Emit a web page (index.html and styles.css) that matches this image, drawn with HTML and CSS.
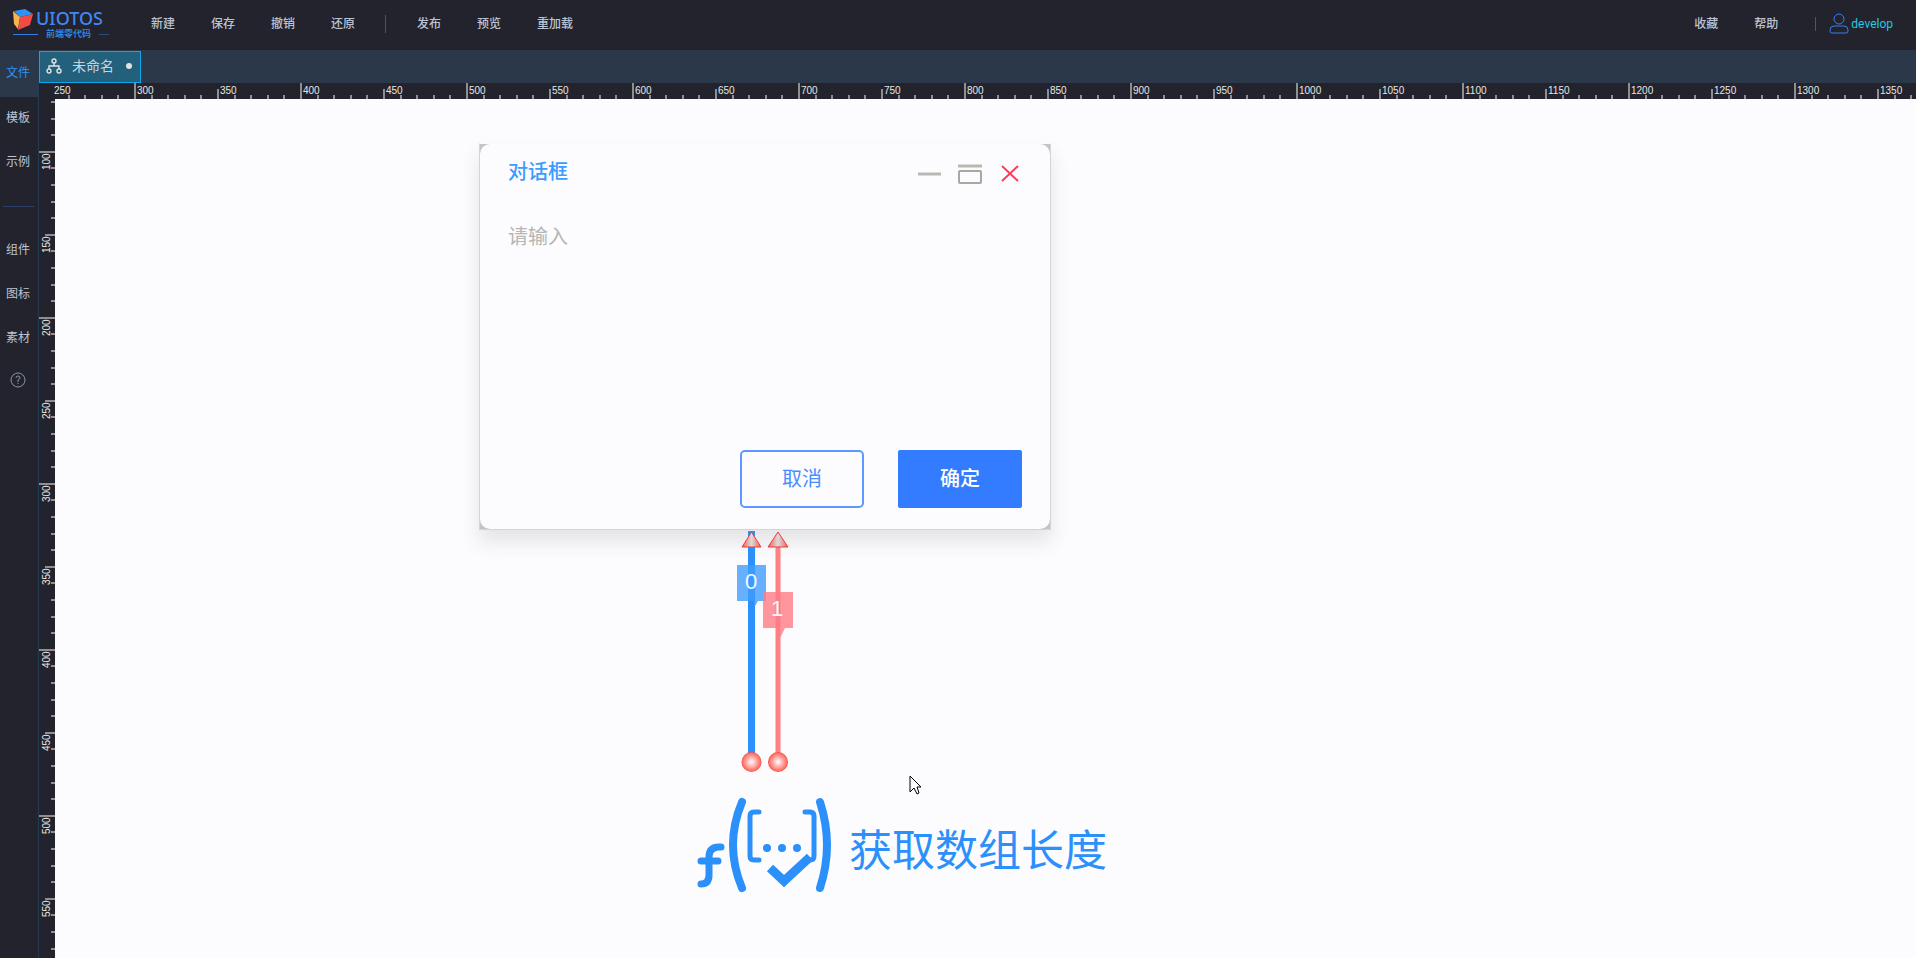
FILE: index.html
```html
<!DOCTYPE html>
<html lang="zh-CN">
  <head>
    <meta charset="UTF-8" />
    <meta name="viewport" content="width=device-width, initial-scale=1.0" />
    <title>UIOTOS</title>
    <link rel="stylesheet" href="styles.css">
  </head>
  <body>
    <header class="topbar">
      <a class="logo" href="#">
        <svg class="logo-cube" viewBox="0 0 20 22">
          <path d="M1 2 L12 0 L20 5 L7 8 Z" fill="#2f93f5" />
          <path d="M0 2 L7 8 L5 20 L1 15 Z" fill="#fbb34c" />
          <path d="M7 8 L20 5 L17 16 L5 21 Z" fill="#f44a45" />
        </svg>
        <span class="logo-name">UIOTOS</span>
        <span class="logo-sub">前端零代码</span>
      </a>
      <nav class="menu">
        <button type="button">新建</button>
        <button type="button">保存</button>
        <button type="button">撤销</button>
        <button type="button">还原</button>
        <i class="sep"></i>
        <button type="button">发布</button>
        <button type="button">预览</button>
        <button type="button">重加载</button>
      </nav>
      <nav class="menu menu-right">
        <button type="button">收藏</button>
        <button type="button">帮助</button>
        <i class="sep"></i>
        <a class="user" href="#">
          <svg viewBox="0 0 20 22" width="20" height="22">
            <circle cx="10" cy="6" r="5" />
            <path d="M1 17 Q1 13 5 13 H15 Q19 13 19 17 V18 Q19 20 17 20 H3 Q1 20 1 18 Z" />
          </svg>
          develop
        </a>
      </nav>
    </header>

    <main class="main">
      <aside class="sidebar">
        <a class="active" href="#">文件</a>
        <a href="#">模板</a>
        <a href="#">示例</a>
        <hr>
        <a href="#">组件</a>
        <a href="#">图标</a>
        <a href="#">素材</a>
        <a class="help" href="#" aria-label="help">
          <svg viewBox="0 0 16 16" width="16" height="16">
            <circle cx="8" cy="8" r="7" />
            <path d="M6 6 Q6 4 8 4 Q10 4 10 6 Q10 7 8 8 V10 M8 11 V12" />
          </svg>
        </a>
      </aside>

      <section class="editor">
        <div class="tabs">
          <button type="button" class="tab">
            <svg viewBox="0 0 16 16" width="16" height="16">
              <circle cx="8" cy="3" r="2" />
              <circle cx="3" cy="13" r="2" />
              <circle cx="13" cy="13" r="2" />
              <path d="M8 5 V8 M3 11 V8 H13 V11" />
            </svg>
            <span>未命名</span>
            <i class="dot"></i>
          </button>
        </div>
        <svg class="ruler-x" id="rulerX"></svg>
        <div class="work">
          <svg class="ruler-y" id="rulerY"></svg>
          <div class="canvas">
            <form class="dialog">
              <div class="dialog-body">
                <div class="dialog-head">
                  <label for="content">对话框</label>
                  <div class="dialog-tools">
                    <button type="button" aria-label="min">
                      <svg viewBox="0 0 24 20" width="24" height="20"><path d="M0 10 H23" stroke="#b9b9b4" stroke-width="3" /></svg>
                    </button>
                    <button type="button" aria-label="max">
                      <svg viewBox="0 0 24 20" width="24" height="20"><path d="M0 2 H24" stroke="#b9b9b4" stroke-width="3" /><rect x="1" y="7" width="22" height="12" rx="1" fill="none" stroke="#a8a8a3" stroke-width="2" /></svg>
                    </button>
                    <button type="button" aria-label="close">
                      <svg viewBox="0 0 24 20" width="24" height="20"><path d="M4 2 L20 17 M20 2 L4 17" stroke="#fb3b5c" stroke-width="2" /></svg>
                    </button>
                  </div>
                </div>
                <textarea id="content" placeholder="请输入"></textarea>
                <div class="dialog-foot">
                  <button type="button" class="btn">取消</button>
                  <button type="button" class="btn primary">确定</button>
                </div>
              </div>
            </form>

            <svg class="links" viewBox="0 0 60 245" width="60" height="245">
              <defs>
                <linearGradient id="arrow">
                  <stop offset="0" stop-color="#f0605c" />
                  <stop offset="0.5" stop-color="#dcdcdc" />
                  <stop offset="1" stop-color="#f0605c" />
                </linearGradient>
                <radialGradient id="ball">
                  <stop offset="0" stop-color="#fff" />
                  <stop offset="0.9" stop-color="#ff6a60" />
                  <stop offset="1" stop-color="#f04840" />
                </radialGradient>
              </defs>
              <path d="M16.5 0 V226" stroke="#2c90fb" stroke-width="7" />
              <path d="M43 4 V226" stroke="#ff8080" stroke-width="5" />
              <path d="M16.5 1 L26 16 H7 Z" fill="url(#arrow)" stroke="#f03a3a" />
              <path d="M43 1 L53 16 H33 Z" fill="url(#arrow)" stroke="#f03a3a" />
              <path d="M2 34 H31 V70 H23 L19 77 V70 H2 Z" fill="#409cff" fill-opacity="0.8" />
              <path d="M28 61 H58 V97 H50 L45 107 V97 H28 Z" fill="#ff7c84" fill-opacity="0.8" />
              <text x="16" y="58">0</text>
              <text x="42" y="85">1</text>
              <circle cx="16.5" cy="231" r="10" fill="url(#ball)" />
              <circle cx="43" cy="231" r="10" fill="url(#ball)" />
            </svg>

            <div class="func">
              <svg viewBox="0 0 136 96" width="136" height="96">
                <path d="M45 5 Q27 48 45 91 M123 5 Q137 48 123 91" stroke-width="8" />
                <path d="M62 15 H57 Q53 15 53 19 V59 Q53 63 57 63 H62 M108 15 H113 Q117 15 117 19 V59 Q117 63 113 63" stroke-width="5" />
                <path d="M24 50 H22 Q12 50 12 60 V78 Q12 87 4 87 M4 64 H21" stroke-width="7" />
                <path d="M73 71 L87 84 L113 60" stroke-width="9" stroke-linecap="butt" stroke-linejoin="miter" />
                <g fill="#2c90fb" stroke="none">
                  <circle cx="70" cy="51" r="4" />
                  <circle cx="85" cy="51" r="4" />
                  <circle cx="100" cy="51" r="4" />
                </g>
              </svg>
              <span>获取数组长度</span>
            </div>

            <svg class="cursor" viewBox="0 0 13 20" width="13" height="20">
              <path d="M1 1 V17 L5 13 L8 19 L10 18 L8 12 H12 Z" />
            </svg>
          </div>
        </div>
      </section>
    </main>
    <script src="rulers.js"></script>
  </body>
</html>
```
FILE: styles.css
```css
* {
  box-sizing: border-box;
}

body {
  margin: 0;
  height: 100vh;
  display: flex;
  flex-direction: column;
  overflow: hidden;
  background: #22232c;
  color: #bcc3d4;
  font: 12px/16px "Liberation Sans", "Noto Sans CJK SC", sans-serif;
}

a {
  color: inherit;
  text-decoration: none;
}

button {
  border: 0;
  padding: 0;
  background: none;
  color: inherit;
  font: inherit;
  cursor: pointer;
}

/* top bar */
.topbar {
  display: flex;
  align-items: center;
  flex: none;
  height: 50px;
  padding: 0 23px 2px 13px;
}

.logo {
  display: grid;
  grid-template-columns: 23px auto;
  width: 120px;
  color: #4087f7;
}

.logo-cube {
  width: 20px;
  height: 22px;
}

.logo-name {
  font: 500 18px/18px "Noto Sans", sans-serif;
}

.logo-sub {
  grid-column: 1 / 3;
  display: flex;
  align-items: center;
  gap: 8px;
  width: 96px;
  margin-top: -2px;
  font-size: 9px;
  font-weight: 500;
  line-height: 10px;
  color: #2f93f5;
}

.logo-sub::before,
.logo-sub::after {
  content: "";
  width: 25px;
  height: 1px;
  background: #2f7fe0;
}

.logo-sub::after {
  width: 10px;
  background: #2b4c80;
}

.menu {
  display: flex;
  align-items: center;
  font-weight: 500;
}

.menu button {
  padding: 0 18px;
}

.menu-right {
  margin-left: auto;
}

.sep {
  width: 1px;
  height: 18px;
  margin: 0 13px 0 12px;
  background: #45566f;
}

.menu-right .sep {
  height: 14px;
  margin: 0 13px 0 19px;
}

.user {
  display: flex;
  align-items: center;
  gap: 2px;
  color: #22cbe0;
  font-family: Roboto, sans-serif;
  font-weight: 400;
}

.user svg {
  fill: none;
  stroke: #3a7df0;
}

/* left side */
.main {
  display: flex;
  flex: 1;
  min-height: 0;
}

.sidebar {
  display: flex;
  flex-direction: column;
  flex: none;
  width: 39px;
  border-right: 1px solid #243a52;
}

.sidebar a {
  height: 44px;
  padding-right: 2px;
  line-height: 42px;
  text-align: center;
}

.sidebar .active {
  height: 47px;
  line-height: 46px;
  background: #2a384a;
  color: #2f93f5;
}

.sidebar hr {
  width: 31px;
  height: 1px;
  margin: 21px 0 22px 3px;
  border: 0;
  background: #2b3f6c;
}

.sidebar .help {
  display: grid;
  place-items: center;
  height: 38px;
}

.help svg {
  fill: none;
  stroke: #8a98a4;
}

/* editor */
.editor {
  display: flex;
  flex-direction: column;
  flex: 1;
  min-width: 0;
}

.tabs {
  flex: none;
  height: 33px;
  padding-top: 1px;
  background: #2a384a;
}

.tab {
  display: flex;
  align-items: center;
  height: 32px;
  padding: 0 8px 2px 6px;
  border: 1px solid #0aa8ee;
  background: #22607c;
  color: #c9d3dc;
  font-size: 14px;
}

.tab svg {
  margin-right: 10px;
  fill: none;
  stroke: #e2e2e2;
  stroke-width: 1.4;
}

.dot {
  width: 6px;
  height: 6px;
  margin-left: 12px;
  border-radius: 50%;
  background: #e2e2e2;
}

.ruler-x {
  flex: none;
  width: 100%;
  height: 16px;
}

.ruler-x path,
.ruler-y path {
  stroke: #8f8f8f;
  stroke-width: 2;
}

.ruler-x text,
.ruler-y text {
  fill: #e6e6e6;
  font: 10px "Liberation Sans", sans-serif;
}

.work {
  display: flex;
  flex: 1;
  min-height: 0;
}

.ruler-y {
  flex: none;
  width: 16px;
  height: 100%;
}

.canvas {
  position: relative;
  flex: 1;
  overflow: hidden;
  background: #fcfcff;
}

/* canvas nodes */
.dialog {
  position: absolute;
  left: 424px;
  top: 44px;
  width: 572px;
  border: 1px solid #d4d4d4;
  border-top-color: #fcfcff;
  background: #c4c4c4;
  box-shadow: 0 12px 18px rgba(60, 60, 60, 0.12);
}

.dialog-body {
  padding: 16px 28px 21px;
  border-radius: 10px;
  background: #fcfcff;
  font-size: 20px;
  line-height: 24px;
}

.dialog-head {
  display: flex;
  justify-content: space-between;
  align-items: flex-end;
  color: #3c9bff;
  font-weight: 500;
}

.dialog-tools {
  display: flex;
  gap: 16px;
}

.dialog-tools svg {
  display: block;
}

.dialog textarea {
  display: block;
  width: 100%;
  height: 200px;
  margin: 41px 0 25px;
  padding: 0;
  border: 0;
  background: none;
  font: inherit;
  resize: none;
}

.dialog textarea::placeholder {
  color: #b5b5b5;
}

.dialog-foot {
  display: flex;
  justify-content: flex-end;
  gap: 34px;
}

.btn {
  width: 124px;
  height: 58px;
  border: 2px solid #5c98ff;
  border-radius: 5px;
  color: #4a8cff;
}

.btn.primary {
  border: 0;
  border-radius: 2px;
  background: #347cff;
  color: #fff;
  font-weight: 500;
}

.links {
  position: absolute;
  left: 680px;
  top: 432px;
}

.links text {
  fill: #f4f8ff;
  font: 22px "Liberation Sans", sans-serif;
  text-anchor: middle;
}

.func {
  position: absolute;
  left: 642px;
  top: 698px;
  display: flex;
  align-items: center;
  gap: 16px;
  color: #2c90fb;
  font-size: 43px;
  line-height: 60px;
}

.func span {
  padding-top: 12px;
}

.func svg {
  fill: none;
  stroke: #2c90fb;
  stroke-linecap: round;
  stroke-linejoin: round;
}

.cursor {
  position: absolute;
  left: 854px;
  top: 676px;
  fill: #fff;
  stroke: #000;
}
```
FILE: rulers.js
```js
const scale = 1.66;

function draw(svg, size, first, start, vertical) {
  let html = "";
  for (let v = first; start + (v - first) * scale < size; v += 10) {
    const p = Math.round(start + (v - first) * scale);
    const from = v % 100 === 0 ? 0 : v % 50 === 0 ? 6 : 12;
    if (vertical) {
      html += `<path d="M${from} ${p} H16" />`;
      if (v % 50 === 0) {
        html += `<text transform="translate(11 ${p + 18}) rotate(-90)">${v}</text>`;
      }
    } else {
      if (p > 16) html += `<path d="M${p} ${from} V16" />`;
      if (v % 50 === 0) {
        html += `<text x="${p + 2}" y="11">${v}</text>`;
      }
    }
  }
  svg.innerHTML = html;
}

const rulerX = document.querySelector("#rulerX");
const rulerY = document.querySelector("#rulerY");

function drawRulers() {
  draw(rulerX, rulerX.clientWidth, 250, 13, false);
  draw(rulerY, rulerY.clientHeight, 70, 3, true);
}

drawRulers();
window.addEventListener("resize", drawRulers);
```
